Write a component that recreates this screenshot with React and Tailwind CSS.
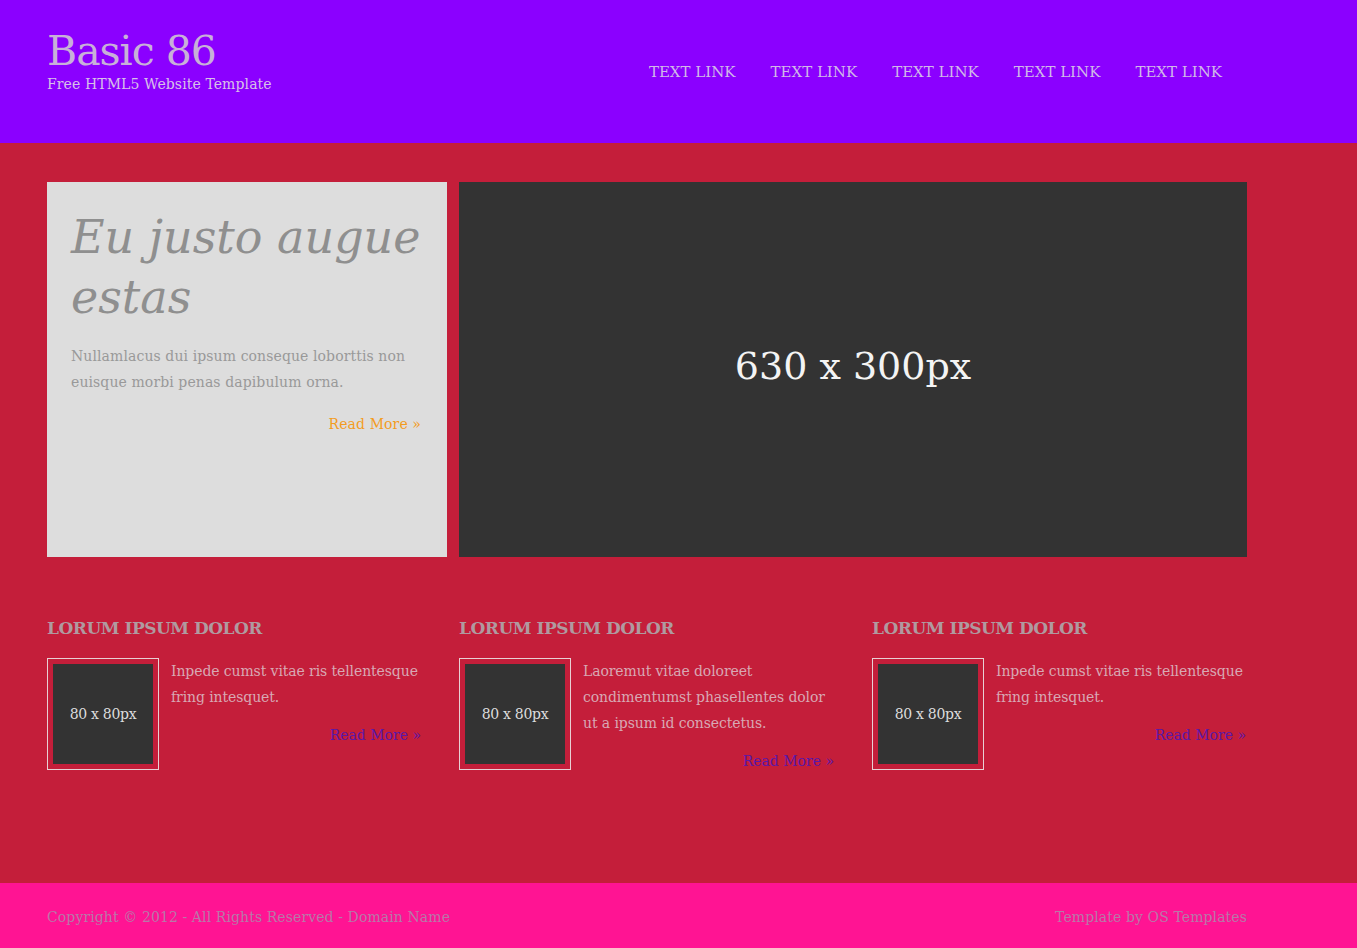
import React from 'react'

const NAV = ['TEXT LINK', 'TEXT LINK', 'TEXT LINK', 'TEXT LINK', 'TEXT LINK']

const COLUMNS = [
  { text: 'Inpede cumst vitae ris tellentesque fring intesquet.' },
  { text: 'Laoremut vitae doloreet condimentumst phasellentes dolor ut a ipsum id consectetus.' },
  { text: 'Inpede cumst vitae ris tellentesque fring intesquet.' },
]

const serif = { fontFamily: '"DejaVu Serif", "Liberation Serif", serif' }

function Thumb() {
  return (
    <div className="shrink-0 border border-[#e8d0d4] p-[5px]">
      <div className="w-[100px] h-[100px] bg-[#333333] flex items-center justify-center text-[14px] text-[#dddddd] tracking-[-0.3px]">
        80 x 80px
      </div>
    </div>
  )
}

export default function App() {
  return (
    <div className="min-h-screen flex flex-col bg-[#c41e3a]" style={serif}>
      {/* Header */}
      <header className="bg-[#8b00ff] h-[143px]">
        <div className="ml-[47px] w-[1200px] flex items-start justify-between">
          <div className="pt-[27px]">
            <h1 className="text-[41px] leading-[48px] text-[#c8b0d8] tracking-[-1px]">Basic 86</h1>
            <p className="text-[14px] leading-[18px] text-[#d8c0e8] tracking-[0.1px]">Free HTML5 Website Template</p>
          </div>
          <nav className="flex gap-[35px] pt-[62px] pr-[25px]">
            {NAV.map((l, i) => (
              <a key={i} href="#" className="text-[15px] leading-[20px] text-[#d0b8e8]">{l}</a>
            ))}
          </nav>
        </div>
      </header>

      {/* Main */}
      <main className="flex-1 h-[740px]">
        <div className="ml-[47px] w-[1200px] pt-[39px]">
          {/* Featured */}
          <div className="flex gap-[12px] h-[375px]">
            <div className="w-[400px] bg-[#dddddd] px-[24px] pt-[25px]">
              <h2 className="text-[46px] leading-[60px] italic text-[#8f8f8f]">Eu justo augue estas</h2>
              <p className="mt-[16px] text-[14px] leading-[26px] text-[#999999] tracking-[0.1px]">
                Nullamlacus dui ipsum conseque loborttis non euisque morbi penas dapibulum orna.
              </p>
              <p className="mt-[16px] text-right pr-[2px] text-[14px] leading-[26px] text-[#f39c1f] tracking-[0.1px]">Read More »</p>
            </div>
            <div className="flex-1 bg-[#333333] flex items-center justify-center">
              <span className="-mt-[6px] text-[38px] text-[#f4f4f4]">630 x 300px</span>
            </div>
          </div>

          {/* Columns */}
          <div className="grid grid-cols-[374px_375px_374px] gap-[38px] mt-[59px]">
            {COLUMNS.map((c, i) => (
              <div key={i}>
                <h3 className="text-[17px] leading-[24px] font-bold text-[#b09aa0] tracking-[-0.5px]">LORUM IPSUM DOLOR</h3>
                <div className="flex items-start gap-[12px] mt-[18px]">
                  <Thumb />
                  <div className="flex-1">
                    <p className="text-[14px] leading-[26px] text-[#d8a8b4] tracking-[-0.1px]">{c.text}</p>
                    <p className="mt-[12px] text-right text-[14px] leading-[26px] text-[#5a18a8]">Read More »</p>
                  </div>
                </div>
              </div>
            ))}
          </div>
        </div>
      </main>

      {/* Footer */}
      <footer className="bg-[#ff1493] h-[65px]">
        <div className="ml-[47px] w-[1200px] h-full pt-[4px] flex items-center justify-between text-[14px] text-[#b878a8] tracking-[0.1px]">
          <p>Copyright © 2012 - All Rights Reserved - Domain Name</p>
          <p>Template by OS Templates</p>
        </div>
      </footer>
    </div>
  )
}
